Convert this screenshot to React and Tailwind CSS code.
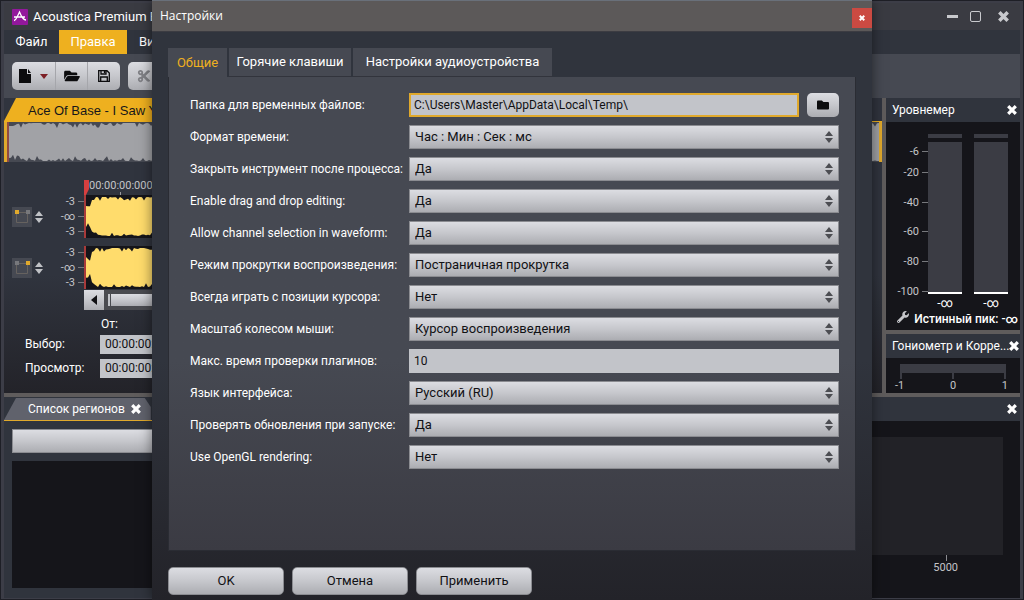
import React from "react";
import { FaFile, FaFolderOpen, FaFolder, FaWrench, FaCut } from "react-icons/fa";

const FACE = "bg-linear-to-b from-[#dcdde2] via-[#c6c7cc] to-[#acadb2]";

function wavePath(width, height, step, inset, depth, lead, seed) {
  let s = seed;
  const rnd = () => {
    s = (s * 16807) % 2147483647;
    return s / 2147483647;
  };
  const top = [];
  const bottom = [];
  for (let x = 0; x <= width; x += step) {
    const ease = x < 5 ? lead : x < 9 ? lead / 3 : 0;
    const a = inset + ease + Math.pow(rnd(), 3) * depth;
    const b = inset + ease + Math.pow(rnd(), 3) * depth;
    top.push(`${x} ${a.toFixed(1)}`);
    bottom.unshift(`${x} ${(height - b).toFixed(1)}`);
  }
  return `M${top.join("L")}L${bottom.join("L")}Z`;
}

const OVERVIEW = wavePath(900, 40, 2, 1, 5, 3, 77);
const LEFT = wavePath(900, 43, 2, 2, 4, 9, 1234);
const RIGHT = wavePath(900, 43, 2, 2, 4, 9, 991);

function Cross({ className = "size-[10px]" }) {
  return (
    <svg viewBox="0 0 10 10" className={className} aria-hidden="true">
      <path d="M1.200 1.200L8.800 8.800M8.800 1.200L1.200 8.800" stroke="currentColor" strokeWidth="3.200" />
    </svg>
  );
}

function Arrows({ className }) {
  return (
    <svg viewBox="0 0 8 12" className={className} aria-hidden="true">
      <path d="M4 0L8 5H0ZM4 12L0 7H8Z" fill="currentColor" />
    </svg>
  );
}

function ChannelToggle({ right, label }) {
  return (
    <div className="flex items-center gap-[3px]">
      <button aria-label={label} className="size-5 bg-[#464952]">
        <svg viewBox="0 0 20 20" className="size-5">
          <path d="M4.500 5.500H15.500V15.500H4.500Z" fill="none" stroke="#66625f" />
          <rect x="3" y="3" width="4" height="4" fill={right ? "#77787c" : "#e0a92c"} />
          <rect x="14" y="3" width="4" height="4" fill={right ? "#e0a92c" : "#77787c"} />
        </svg>
      </button>
      <Arrows className="h-3 w-2 text-[#c0c2c6]" />
    </div>
  );
}

function Channel({ path, right, label }) {
  return (
    <div className="mr-3 flex h-[43px] items-center">
      <div className="w-[42px] pl-2">
        <ChannelToggle right={right} label={label} />
      </div>
      <div className="flex w-[38px] flex-col text-right text-[11px] leading-[15px] text-[#c4c5c9]">
        {["-3", "-∞", "-3"].map((t, i) => (
          <div key={i} className="flex items-center justify-end gap-[3px]">
            {t}
            <span className="h-px w-[6px] bg-[#77787c]" />
          </div>
        ))}
      </div>
      <div className="h-full flex-1 overflow-hidden border-l-2 border-[#a83a3a] bg-[#15151a]">
        <svg width="900" height="43" viewBox="0 0 900 43" className="max-w-none">
          <path d={path} fill="#ffdc6c" />
        </svg>
      </div>
    </div>
  );
}

function TimeField({ id, label }) {
  return (
    <div className="flex items-center">
      <label htmlFor={id} className="w-[75px] text-xs leading-5">
        {label}
      </label>
      <input
        id={id}
        defaultValue="00:00:00:000"
        className="h-[19px] w-[88px] bg-[#c2c4c9] pl-[5px] text-xs text-[#111114] outline-none"
      />
    </div>
  );
}

function PanelHeader({ title }) {
  return (
    <div className="flex h-6 shrink-0 items-center justify-between bg-[#30343d] pr-[3px] pl-[6px] text-xs">
      <span className="whitespace-nowrap">{title}</span>
      <button aria-label="Закрыть панель">
        <Cross />
      </button>
    </div>
  );
}

function Editor() {
  return (
    <section className="flex min-w-0 flex-1 flex-col bg-linear-to-b from-[#30343e] from-60% to-[#232329]">
      <div className="flex h-6 border-b border-[#eeb01f]">
        <div className="w-[190px] bg-[#eeb01f] pl-6 font-['Liberation_Sans',sans-serif] text-[13px] leading-[25px] whitespace-nowrap text-[#17171a] [clip-path:polygon(12px_0,100%_0,100%_100%,0_100%)]">
          Ace Of Base - I Saw You
        </div>
      </div>
      <div className="flex h-10 overflow-hidden bg-[#464952]">
        <div className="w-[3px] shrink-0 bg-[#e0a92c]" />
        <div className="min-w-0 flex-1 overflow-hidden border-l-2 border-[#8f4a45]">
          <svg width="900" height="40" viewBox="0 0 900 40" className="max-w-none">
            <path d={OVERVIEW} fill="#a1a2a6" />
          </svg>
        </div>
        <div className="w-[3px] shrink-0 bg-[#e0a92c]" />
      </div>
      <div className="flex h-[33px] items-end pl-20 text-[11px] text-[#c4c5c9]">
        <svg viewBox="0 0 5 15" className="h-[15px] w-[5px]" aria-hidden="true">
          <path d="M0 0H5V9L2 15H0Z" fill="#d63f3f" />
        </svg>
        <div className="flex flex-col items-center">
          <span className="leading-[13px]">00:00:00:000</span>
          <span className="h-[3px] w-px bg-[#9a9b9f]" />
        </div>
      </div>
      <div className="flex flex-col gap-2">
        <Channel path={LEFT} label="Левый канал" />
        <Channel path={RIGHT} right label="Правый канал" />
      </div>
      <div className="mt-px mr-3 ml-20 flex h-5 bg-[#4a4b50]">
        <button aria-label="Прокрутить влево" className={`flex w-5 items-center justify-center ${FACE}`}>
          <svg viewBox="0 0 6 10" className="h-[10px] w-[6px]">
            <path d="M6 0V10L0 5Z" fill="#111114" />
          </svg>
        </button>
        <div className="my-1 ml-1 flex-1 border-l-2 border-[#c2c4c9] pl-px">
          <div className={`h-3 ${FACE}`} />
        </div>
      </div>
      <div className="flex flex-col gap-1 pt-2 pb-[15px] pl-[21px]">
        <span className="pl-[76px] text-xs leading-3">От:</span>
        <TimeField id="sel" label="Выбор:" />
        <TimeField id="view" label="Просмотр:" />
      </div>
    </section>
  );
}

function Meter() {
  const marks = [
    ["-6", "h-[21px]"],
    ["-20", "h-[30px]"],
    ["-40", "h-[29px]"],
    ["-60", "h-[30px]"],
    ["-80", "h-[30px]"],
    ["-100", "h-[14px]"],
  ];
  return (
    <div className="flex flex-col bg-[#15151a] pt-3">
      <div className="flex">
        <div className="flex w-[42px] flex-col pt-[11px] text-[11px] text-[#c4c5c9]">
          {marks.map(([t, h]) => (
            <div key={t} className={`flex items-start justify-end gap-[3px] leading-[13px] ${h}`}>
              <span>{t}</span>
              <span className="mt-[6px] h-px w-[6px] bg-[#77787c]" />
            </div>
          ))}
        </div>
        <div className="flex gap-3">
          {[0, 1].map((i) => (
            <div key={i} className="flex w-[34px] flex-col items-center">
              <div className="h-1 w-full bg-[#3b3c44]" />
              <div className="mt-1 h-[152px] w-full border-b-2 border-white bg-[#3b3c44]" />
              <span className="mt-px text-xs leading-4">-∞</span>
            </div>
          ))}
        </div>
      </div>
      <div className="flex h-[19px] items-start justify-between pr-[2px] pl-[11px]">
        <FaWrench className="size-3 text-[#c4c5c9]" />
        <span className="text-xs leading-4 font-medium whitespace-nowrap">Истинный пик: -∞</span>
      </div>
    </div>
  );
}

function Goniometer() {
  return (
    <div className="bg-[#15151a] px-[14px] pt-[6px] pb-px text-[11px] text-[#c4c5c9]">
      <div className="h-[9px] bg-[#3b3c44]" />
      <div className="flex h-[6px] justify-between">
        <span className="w-[2px] bg-[#3b3c44]" />
        <span className="w-[2px] bg-[#3b3c44]" />
        <span className="w-[2px] bg-[#3b3c44]" />
      </div>
      <div className="-mx-[5px] flex justify-between leading-[13px]">
        <span>-1</span>
        <span>0</span>
        <span className="pr-[3px]">1</span>
      </div>
    </div>
  );
}

function MainWindow() {
  return (
    <div className="flex min-h-screen flex-col border-4 border-t-[3px] border-b-2 border-[#3c3d47] bg-[#30343d] text-white outline-1 -outline-offset-1 outline-[#1e1f26]">
      <header className="flex h-[27px] items-center bg-[#3a3b42] pr-[11px] pl-2">
        <svg viewBox="0 0 16 16" className="size-4" aria-hidden="true">
          <rect width="16" height="16" rx="1" fill="#93189c" />
          <path d="M2 11.500C4 11.500 5 8 7.500 3C9.500 8 11 11 14 11M2 8H13" fill="none" stroke="#fff" strokeWidth="1.300" />
        </svg>
        <h1 className="w-[124px] overflow-hidden pl-[5px] text-[13px] whitespace-nowrap">Acoustica Premium Edition</h1>
        <div className="ml-auto flex items-center gap-3 text-[#c8c9cd]">
          <button aria-label="Свернуть" className="h-[3px] w-[11px] bg-[#c8c9cd]" />
          <button aria-label="Развернуть" className="size-[11px] rounded-xs border border-[#c8c9cd]" />
          <button aria-label="Выход" className="pl-[5px]">
            <Cross className="size-[11px]" />
          </button>
        </div>
      </header>
      <nav className="flex h-6 text-[13px] leading-6">
        <button className="w-[55px]">Файл</button>
        <button className="w-[68px] bg-[#eeb01f]">Правка</button>
        <button className="px-3">Вид</button>
      </nav>
      <div className="flex h-11 items-center gap-2 bg-[#464952] px-2 text-[#0c0c0e]">
        <div className={`flex h-7 w-[108px] items-center rounded-[5px] ${FACE}`}>
          <button aria-label="Новый файл" className="flex h-full w-11 items-center justify-center gap-[9px] border-r border-[#a5a6ab]">
            <svg viewBox="0 0 12 14" className="h-[14px] w-3">
              <path d="M0 0H8V5H12V14H0ZM9 0L12 4H9Z" fill="currentColor" />
            </svg>
            <svg viewBox="0 0 8 5" className="h-[5px] w-2">
              <path d="M0 0H8L4 5Z" fill="#7d1f25" />
            </svg>
          </button>
          <button aria-label="Открыть" className="flex h-full w-8 items-center justify-center border-r border-[#a5a6ab]">
            <FaFolderOpen className="h-[14px] w-4" />
          </button>
          <button aria-label="Сохранить" className="flex h-full w-8 items-center justify-center">
            <svg viewBox="0 0 12 12" className="size-3">
              <path d="M0.700 0.700H9L11.300 3V11.300H0.700ZM3 0.700V4H8V0.700M2.700 11V7H9.300V11M6.500 1V3" fill="none" stroke="currentColor" strokeWidth="1.300" />
            </svg>
          </button>
        </div>
        <button aria-label="Вырезать" className={`flex h-7 w-[108px] items-center rounded-[5px] pl-[9px] text-[#808186] ${FACE}`}>
          <FaCut className="size-[14px]" />
        </button>
      </div>
      <div className="flex">
        <Editor />
        <aside className="flex w-[138px] shrink-0 flex-col gap-1 border-l-4 border-[#5f5c5c] bg-[#5f5c5c]">
          <div>
            <PanelHeader title="Уровнемер" />
            <Meter />
          </div>
          <div>
            <PanelHeader title="Гониометр и Корре..." />
            <Goniometer />
          </div>
        </aside>
      </div>
      <div className="flex flex-1 border-t-4 border-[#5f5c5c]">
        <section className="flex flex-1 flex-col">
          <div className="flex h-6 border-b border-[#e0a92c]">
            <div className="flex items-center gap-[6px] bg-[#60626c] pr-[10px] pl-6 text-xs [clip-path:polygon(12px_1px,calc(100%-6px)_1px,100%_10px,100%_100%,0_100%)]">
              Список регионов
              <button aria-label="Закрыть вкладку">
                <Cross />
              </button>
            </div>
          </div>
          <div className={`mx-2 mt-2 h-6 border border-[#8b8c91] ${FACE}`} />
          <div className="mx-2 mt-2 mb-[10px] flex-1 bg-[#15151a]" />
        </section>
        <section className="flex flex-1 flex-col">
          <PanelHeader title="" />
          <div className="flex flex-1 flex-col bg-[#15151a] pt-4 pr-[17px] pb-6">
            <div className="flex-1 bg-[#222227]" />
            <div className="flex flex-col items-end pr-[45px] text-[11px] leading-[13px] text-[#c4c5c9]">
              <span className="mr-[11px] h-[6px] w-px bg-[#8b8c91]" />
              <span>5000</span>
            </div>
          </div>
        </section>
      </div>
    </div>
  );
}

function Row({ id, label, value }) {
  return (
    <>
      <label htmlFor={id} className="text-xs leading-6 whitespace-nowrap">
        {label}
      </label>
      <div className="relative flex h-6">
        <select
          id={id}
          defaultValue={value}
          className={`h-6 w-full appearance-none border border-[#8b8c91] px-[5px] text-[13px] text-[#111114] ${FACE}`}
        >
          <option>{value}</option>
        </select>
        <Arrows className="pointer-events-none absolute top-[6px] right-[6px] h-3 w-2 text-[#4c4d52]" />
      </div>
    </>
  );
}

const BEFORE = [
  ["format", "Формат времени:", "Час : Мин : Сек : мс"],
  ["close", "Закрыть инструмент после процесса:", "Да"],
  ["drag", "Enable drag and drop editing:", "Да"],
  ["channels", "Allow channel selection in waveform:", "Да"],
  ["scroll", "Режим прокрутки воспроизведения:", "Постраничная прокрутка"],
  ["cursor", "Всегда играть с позиции курсора:", "Нет"],
  ["zoom", "Масштаб колесом мыши:", "Курсор воспроизведения"],
];

const AFTER = [
  ["lang", "Язык интерфейса:", "Русский (RU)"],
  ["updates", "Проверять обновления при запуске:", "Да"],
  ["opengl", "Use OpenGL rendering:", "Нет"],
];

function SettingsDialog() {
  return (
    <div
      role="dialog"
      aria-label="Настройки"
      className="absolute inset-x-[152px] inset-y-0 flex flex-col bg-linear-to-b from-[#30343d] from-60% to-[#232329] text-white shadow-[0_0_12px_rgba(0,0,0,0.5)]"
    >
      <header className="flex h-8 shrink-0 items-center justify-between border-t border-b border-t-[#69707a] border-b-[#3c3c42] bg-[#5c5959] pl-2">
        <h2 className="font-['Open_Sans',sans-serif] text-xs">Настройки</h2>
        <button aria-label="Закрыть" className="mt-1 flex size-5 items-center justify-center bg-[#cb4a42]">
          <Cross className="size-[6px]" />
        </button>
      </header>
      <div role="tablist" className="flex h-[45px] shrink-0 items-end gap-[2px] px-4 text-[13px]">
        <button role="tab" aria-selected="true" className="h-[29px] w-[59px] bg-[#464952] text-[#eeb01f]">
          Общие
        </button>
        <button role="tab" className="h-[29px] w-[122px] border-b border-[#32343c] bg-[#464952]">
          Горячие клавиши
        </button>
        <button role="tab" className="h-[29px] w-[199px] border-b border-[#32343c] bg-[#464952]">
          Настройки аудиоустройства
        </button>
      </div>
      <div className="mx-4 flex-1 border border-t-0 border-[#2a2c33] bg-linear-to-b from-[#464952] from-60% to-[#3b3b43] pt-4 pr-4 pl-[21px]">
        <div className="grid grid-cols-[219px_1fr] gap-y-2">
          <label htmlFor="temp" className="text-xs leading-6 whitespace-nowrap">
            Папка для временных файлов:
          </label>
          <div className="flex gap-2">
            <input
              id="temp"
              defaultValue="C:\Users\Master\AppData\Local\Temp\"
              className="h-6 min-w-0 flex-1 border-2 border-[#e0a92c] bg-[#c2c4c9] px-[3px] text-xs text-[#111114] outline-none"
            />
            <button aria-label="Обзор" className={`flex w-8 items-center justify-center rounded-[5px] text-[#0c0c0e] ${FACE}`}>
              <FaFolder className="size-3" />
            </button>
          </div>
          {BEFORE.map(([id, label, value]) => (
            <Row key={id} id={id} label={label} value={value} />
          ))}
          <label htmlFor="timeout" className="text-xs leading-6 whitespace-nowrap">
            Макс. время проверки плагинов:
          </label>
          <input
            id="timeout"
            defaultValue="10"
            className="h-6 min-w-0 bg-[#c2c4c9] px-[5px] text-xs text-[#111114] outline-none"
          />
          {AFTER.map(([id, label, value]) => (
            <Row key={id} id={id} label={label} value={value} />
          ))}
        </div>
      </div>
      <footer className="flex shrink-0 gap-2 px-4 pt-4 pb-[5px] text-[13px] text-[#111114]">
        {["OK", "Отмена", "Применить"].map((t) => (
          <button key={t} className={`h-7 w-[116px] rounded-[5px] border border-[#8b8c91] ${FACE}`}>
            {t}
          </button>
        ))}
      </footer>
    </div>
  );
}

export default function App() {
  return (
    <div className="relative font-[Roboto,'Liberation_Sans',sans-serif]">
      <MainWindow />
      <SettingsDialog />
    </div>
  );
}
